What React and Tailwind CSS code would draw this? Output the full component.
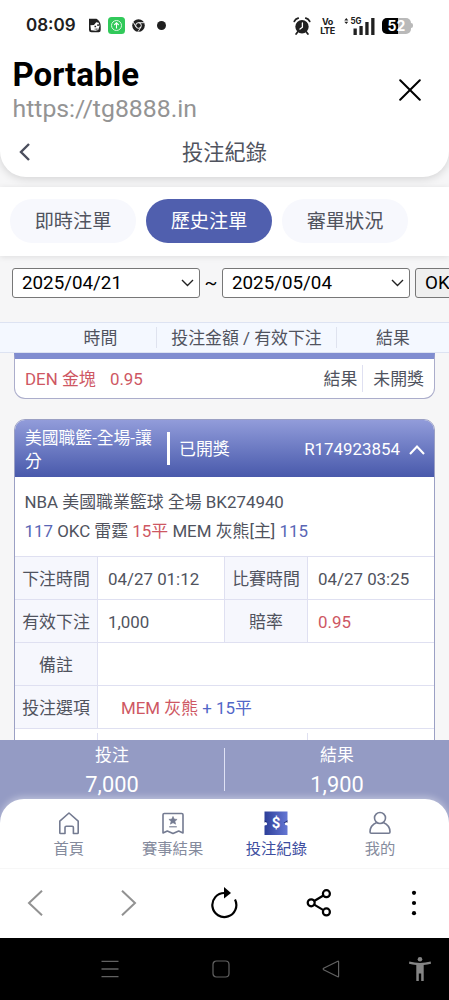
import { useState } from 'react';

const TABS = ['即時注單', '歷史注單', '審單狀況'];

const AlarmIcon = () => (
  <svg width="18" height="18" viewBox="0 0 18 18" className="shrink-0">
    <circle cx="9" cy="9.8" r="6.7" fill="#202020" />
    <path d="M1.3 4.4A6 6 0 0 1 5.2 1.2M16.7 4.4A6 6 0 0 0 12.8 1.2" stroke="#202020" strokeWidth="1.8" fill="none" strokeLinecap="round" />
    <path d="M4.6 15l-1.5 2M13.4 15l1.5 2" stroke="#202020" strokeWidth="1.8" strokeLinecap="round" />
    <path d="M9.4 6v4.2L7 12" stroke="#fff" strokeWidth="1.3" fill="none" strokeLinecap="round" />
  </svg>
);

const StatusBar = () => (
  <div className="flex h-[51px] shrink-0 items-center pl-[26px] pr-[36px]">
    <span className="w-[62px] font-[Inter] text-[17px] font-semibold leading-none text-[#202020]">08:09</span>
    <svg width="14" height="15" viewBox="0 0 14 15" className="shrink-0">
      <path d="M1 .8h7.5C11 2 12.7 5 12.7 8v4q0 2.2-2 2.2H3.5Q1 14.2 1 12z" fill="#202020" />
      <path d="M2.4 7.2 6 7l2.2-2.8 2.5.6.8 3.5-1.3 3.8-2.6.6-4.6-.5z" fill="#fff" />
      <path d="M6.5 7.8h1.6v1.4H6.5zM9.3 6.3h1.5v1.6H9.3zM5.5 11l4-.5v1.2z" fill="#202020" />
    </svg>
    <svg width="17" height="17" viewBox="0 0 17 17" className="ml-[6px] shrink-0">
      <rect width="17" height="17" rx="3.5" fill="#31c95a" />
      <circle cx="8.5" cy="8.5" r="5" fill="none" stroke="#d9f8e0" strokeWidth="1" />
      <path d="M8.5 11.5V6M6.3 8l2.2-2.3L10.7 8" fill="none" stroke="#fff" strokeWidth="1.1" />
    </svg>
    <svg width="13" height="13" viewBox="0 0 13 13" className="ml-[7px] shrink-0">
      <circle cx="6.5" cy="6.5" r="6.3" fill="#202020" />
      <circle cx="6.5" cy="6.5" r="2.8" fill="none" stroke="#fff" strokeWidth="1" />
      <path d="M6.5 3.7h5.6M4 7.9 1.3 3.2M9 7.9 6.1 12.6" stroke="#fff" strokeWidth=".9" />
    </svg>
    <span className="ml-[12px] size-[9px] rounded-full bg-[#202020]" />
    <span className="flex-1" />
    <AlarmIcon />
    <div className="ml-[9px] w-[15px] text-center font-[Inter] text-[9px] font-bold leading-[9px] tracking-[-0.4px] text-[#202020]">
      <p>Vo</p>
      <p>LTE</p>
    </div>
    <svg width="32" height="18" viewBox="0 0 32 18" className="ml-[9px] shrink-0">
      <path d="M.3 3.4 2.3 1l2 2.4zM.3 4.7l2 2.4 2-2.4z" fill="#202020" />
      <text x="6.5" y="7.2" fontFamily="Inter" fontSize="8.5" fontWeight="700" fill="#202020" textLength="11" lengthAdjust="spacingAndGlyphs">5G</text>
      <path d="M9.5 11.5h3.3V18H9.5zM15.4 9h3.3v9h-3.3zM21.3 5h3.3v13h-3.3zM27.2 1h3.3v17h-3.3z" fill="#202020" />
    </svg>
    <div className="relative ml-[6px] flex h-[16px] w-[29px] shrink-0 overflow-hidden rounded-[5px] bg-[#b9b9b9]">
      <span className="w-[16px] bg-black" />
      <span className="absolute inset-0 text-center font-[Inter] text-[14px] font-bold leading-[16px] text-white">52</span>
    </div>
    <span className="h-[5px] w-[2px] shrink-0 rounded-r-full bg-[#b9b9b9]" />
  </div>
);

const DateSelect = ({ value, className }) => (
  <button className={`flex h-[30px] shrink-0 items-center justify-between rounded-[3px] border border-[#777] bg-white pl-[9px] pr-[5px] text-[18.8px] text-black ${className}`}>
    {value}
    <svg width="13" height="8" viewBox="0 0 13 8" fill="none" stroke="#222" strokeWidth="1.4">
      <path d="M1 1l5.5 5.5L12 1" />
    </svg>
  </button>
);

const Label = ({ children }) => (
  <div className="flex items-center justify-center border-b border-r border-[#dfe0f1] bg-[#f6f7fd] pt-[4px]">{children}</div>
);

const Value = ({ children, className = '' }) => (
  <div className={`flex items-center border-b border-[#dfe0f1] pl-[10px] pt-[4px] ${className}`}>{children}</div>
);

const BetCard = () => (
  <div className="mx-[14px] mt-[20px] shrink-0 overflow-hidden rounded-t-[11px] border border-[#9ba0c4] bg-white">
    <div className="flex h-[57px] items-center bg-gradient-to-b from-[#929cda] to-[#4959ab] text-white">
      <div className="ml-[10px] w-[142px] pr-[10px] pt-[2px] text-[16.8px] leading-[23px]">美國職籃-全場-讓分</div>
      <div className="h-[33px] w-[3px] bg-white" />
      <div className="ml-[9px] flex-1 pt-[2px]">已開獎</div>
      <div className="pt-[2px]">R174923854</div>
      <svg width="16" height="10" viewBox="0 0 16 10" fill="none" stroke="#fff" strokeWidth="2.1" className="ml-[9px] mr-[9px] mt-[2px]">
        <path d="M1 9l7-7.4L15 9" />
      </svg>
    </div>
    <div className="h-[80px] border-b border-[#dfe0f1] pl-[9.5px] pt-[11px] leading-[29px]">
      <p>NBA 美國職業籃球 全場 BK274940</p>
      <p>
        <span className="text-[#5966b5]">117</span> OKC 雷霆 <span className="text-[#ce5763]">15平</span> MEM 灰熊[主] <span className="text-[#5966b5]">115</span>
      </p>
    </div>
    <div className="grid auto-rows-[43px] grid-cols-[83px_127px_83px_1fr]">
      <Label>下注時間</Label>
      <Value className="border-r">04/27 01:12</Value>
      <Label>比賽時間</Label>
      <Value>04/27 03:25</Value>
      <Label>有效下注</Label>
      <Value className="border-r">1,000</Value>
      <Label>賠率</Label>
      <Value className="text-[#ce5763]">0.95</Value>
      <Label>備註</Label>
      <Value className="col-span-3" />
      <Label>投注選項</Label>
      <Value className="col-span-3">
        <p className="pl-[13px] text-[#5267c8]"><span className="text-[#ce5763]">MEM 灰熊</span> + 15平</p>
      </Value>
    </div>
    <div className="flex h-[43px] pt-[4px]">
      <div className="w-[83px] border-r border-[#dfe0f1]" />
      <div className="w-[210px] border-r border-[#dfe0f1]" />
    </div>
  </div>
);

const HomeIcon = () => (
  <svg width="24" height="24" viewBox="0 0 24 24" fill="none" stroke="#747b91" strokeWidth="1.6" strokeLinejoin="round">
    <path d="M2.8 10.2 12 2l9.2 8.2v11.5q0 .8-.8.8h-4v-6q0-1.3-1.3-1.3H9.3Q8 15.2 8 16.5v6H3.6q-.8 0-.8-.8z" />
  </svg>
);

const ResultIcon = () => (
  <svg width="24" height="24" viewBox="0 0 24 24" fill="none" stroke="#747b91" strokeWidth="1.6" strokeLinejoin="round">
    <path d="M3.3 2.5h17.4q1.3 0 1.3 1.3v18.2l-4.300-2-5.700 2.500-5.700-2.500-4.300 2V3.800q0-1.300 1.300-1.300z" />
    <path d="m12 5.400 1.200 2.700 2.900.3-2.200 1.900.7 2.900-2.600-1.500-2.600 1.500.7-2.900-2.200-1.900 2.900-.3z" fill="#747b91" strokeWidth=".6" />
    <path d="M8.200 15.800h7.600" strokeWidth="1.1" />
  </svg>
);

const TicketIcon = () => (
  <svg width="24" height="24" viewBox="0 0 24 24">
    <defs>
      <linearGradient id="ticket" x1="0" y1="0" x2="1" y2="0">
        <stop offset="0" stopColor="#2d3f99" />
        <stop offset="1" stopColor="#6577d4" />
      </linearGradient>
    </defs>
    <path d="M.5.5h23v9.200a3 3 0 0 0 0 5V24H.5v-9.300a3 3 0 0 0 0-5z" fill="url(#ticket)" />
    <path d="M23.500 9.200 19.500 12l4-.3zM.5 9.400l2.500 1.300-2.500 1z" fill="#16236d" />
    <circle cx="1.600" cy="12.800" r="1.500" fill="#fff" />
    <circle cx="22.400" cy="12.800" r="1.500" fill="#fff" />
    <text x="12" y="17.200" textAnchor="middle" fontFamily="Roboto" fontSize="15" fontWeight="700" fill="#fff">$</text>
  </svg>
);

const UserIcon = () => (
  <svg width="24" height="24" viewBox="0 0 24 24" fill="none" stroke="#747b91" strokeWidth="1.6" strokeLinejoin="round">
    <circle cx="12" cy="7" r="5.500" />
    <path d="M8.800 11.500C4.500 13.200 2 16.800 2 21q0 1.200 1.200 1.200h17.600q1.200 0 1.200-1.200c0-4.200-2.500-7.800-6.800-9.500" />
  </svg>
);

const NAV = [
  { label: '首頁', icon: HomeIcon },
  { label: '賽事結果', icon: ResultIcon },
  { label: '投注紀錄', icon: TicketIcon, active: true },
  { label: '我的', icon: UserIcon },
];

const BrowserBar = () => (
  <div className="flex h-[70px] shrink-0 items-center border-t border-[#f7f7f7] bg-white pb-[2px] pl-[27px]">
    <svg width="16" height="26" viewBox="0 0 16 26" fill="none" stroke="#929292" strokeWidth="2"><path d="M15 .7 2 13l13 12.300" /></svg>
    <svg width="16" height="26" viewBox="0 0 16 26" fill="none" stroke="#929292" strokeWidth="2" className="ml-[78px]"><path d="M1 .7 14 13 1 25.300" /></svg>
    <svg width="28" height="32" viewBox="0 0 28 32" className="ml-[73px]">
      <path d="M14.500 6A12 12 0 1 0 25 12.500" fill="none" stroke="#000" strokeWidth="2.200" />
      <path d="M14 0v11.500L21 6z" fill="#000" />
    </svg>
    <svg width="26" height="28" viewBox="0 0 26 28" fill="none" stroke="#000" strokeWidth="2.200" className="ml-[67.500px]">
      <circle cx="5.200" cy="13.800" r="3.500" />
      <circle cx="20.400" cy="4.700" r="3.500" />
      <circle cx="20.400" cy="22.900" r="3.500" />
      <path d="m8.200 12 9.200-5.500M8.200 15.600l9.200 5.500" />
    </svg>
    <svg width="8" height="26" viewBox="0 0 8 26" className="ml-[78.500px]">
      <circle cx="4" cy="2.800" r="2.100" /><circle cx="4" cy="13" r="2.100" /><circle cx="4" cy="23.200" r="2.100" />
    </svg>
  </div>
);

const SystemBar = () => (
  <div className="flex h-[62px] shrink-0 items-center bg-black pl-[101px] text-[#626262]">
    <svg width="18" height="18" viewBox="0 0 18 18" stroke="currentColor" strokeWidth="1.300"><path d="M.5 1.300h17M.5 9h17M.5 16.700h17" /></svg>
    <svg width="18" height="18" viewBox="0 0 18 18" fill="none" stroke="currentColor" strokeWidth="1.200" className="ml-[93px]"><rect x="1" y="1" width="16" height="16" rx="3.500" /></svg>
    <svg width="18" height="18" viewBox="0 0 18 18" fill="none" stroke="currentColor" strokeWidth="1.200" strokeLinejoin="round" className="ml-[92px]"><path d="M15.800 1.300q.8-.3.800.6v14.200q0 .9-.8.600L1.600 9.700q-.8-.7 0-1.400z" /></svg>
    <svg width="22" height="26" viewBox="0 0 22 26" fill="#858585" className="ml-[69px]">
      <circle cx="11" cy="3.200" r="2.300" />
      <path d="M.3 5.500Q11 8.300 21.700 5.500l.3 2.300q-3.500 1-7.300 1.200V25h-2.500v-7.500H9.800V25H7.300V9Q3.500 8.800 0 7.800z" />
    </svg>
  </div>
);

export default function App() {
  const [tab, setTab] = useState(1);

  return (
    <div className="flex h-[1000px] w-[449px] flex-col overflow-hidden bg-[#f6f6f7] font-[Roboto,'Noto_Sans_CJK_TC',sans-serif] text-[#50535e]">
      <header className="z-10 h-[177px] shrink-0 rounded-b-[26px] bg-white shadow-[0_2px_8px_rgba(0,0,0,0.14)]">
        <StatusBar />
        <div className="flex h-[78px] items-center justify-between pl-[12.500px] pr-[28px]">
          <div className="pt-[4px]">
            <h1 className="text-[33px] font-bold leading-[34px] text-black">Portable</h1>
            <p className="text-[24.800px] leading-[34px] text-[#949494]">https://tg8888.in</p>
          </div>
          <svg width="22" height="22" viewBox="0 0 22 22" stroke="#000" strokeWidth="2" strokeLinecap="round"><path d="M1.200 1.200l19.600 19.600M20.800 1.200 1.200 20.800" /></svg>
        </div>
        <div className="flex h-[48px] items-center pl-[19px] pr-[30px]">
          <svg width="11" height="18" viewBox="0 0 11 18" fill="none" stroke="#4b4e5d" strokeWidth="2.400" className="mb-[2px]"><path d="M10 1 2 9l8 8" /></svg>
          <h2 className="flex-1 text-center text-[21.200px] leading-[30px]">投注紀錄</h2>
        </div>
      </header>

      <div className="mt-[10px] flex h-[69px] shrink-0 items-center gap-[10px] bg-white pb-px pl-[10px] shadow-[0_1px_6px_rgba(0,0,0,0.1)]">
        {TABS.map((t, i) => (
          <button key={t} onClick={() => setTab(i)}
            className={`h-[44px] w-[126px] rounded-full pt-[3px] text-[19.200px] ${tab === i ? 'bg-[#505fae] text-white' : 'bg-[#f7f8fd]'}`}>
            {t}
          </button>
        ))}
      </div>

      <div className="flex h-[66px] shrink-0 items-start pl-[12px] pt-[12px]">
        <DateSelect value="2025/04/21" className="w-[188px]" />
        <span className="w-[22px] shrink-0 text-center text-[19px] leading-[30px] text-black">~</span>
        <DateSelect value="2025/05/04" className="w-[188px]" />
        <button className="ml-[5px] h-[30px] w-[56px] shrink-0 rounded-[3px] border border-[#777] bg-[#efefef] pl-[9px] text-left text-[18.800px] text-black">OK</button>
      </div>

      <div className="flex h-[31px] shrink-0 items-center border-y border-[#dde3f2] bg-[#f4f8ff] text-[16.900px]">
        <div className="w-[156px] pl-[45px] pt-[2px] text-center">時間</div>
        <div className="h-[21px] w-[181px] border-x border-[#dfe3ef] pt-px text-center leading-[21px]">投注金額 / 有效下注</div>
        <div className="flex-1 pt-[2px] text-center">結果</div>
      </div>

      <main className="flex min-h-0 flex-1 flex-col overflow-hidden text-[16.900px]">
        <div className="mx-[14px] flex h-[46px] shrink-0 items-center rounded-b-[11px] border border-t-[6px] border-[#abadcb] border-t-[#808dd0] bg-white px-[10px]">
          <span className="flex-1 pt-[2px] text-[#ce5763]">DEN 金塊 <span className="ml-[10px]">0.95</span></span>
          <span className="mr-[5px] pt-[2px]">結果</span>
          <span className="h-[27px] border-l border-[#dfe0f1] pl-[10px] pt-px leading-[27px]">未開獎</span>
        </div>
        <BetCard />
      </main>

      <footer className="h-[128px] shrink-0 overflow-hidden bg-[#949bc4]">
        <div className="flex h-[59px] text-center text-white">
          <div className="flex-1">
            <p className="pt-[2px] text-[16.900px] leading-[27px]">投注</p>
            <p className="pt-px text-[21.800px] leading-[30px]">7,000</p>
          </div>
          <div className="mt-[8px] h-[43px] w-px bg-[#dfe2f5]" />
          <div className="flex-1">
            <p className="pt-[2px] text-[16.900px] leading-[27px]">結果</p>
            <p className="pt-px text-[21.800px] leading-[30px]">1,900</p>
          </div>
        </div>
        <nav className="flex h-[69px] rounded-t-[24px] bg-white px-[17px] shadow-[0_-2px_7px_rgba(255,255,255,0.4)]">
          {NAV.map(({ label, icon: Icon, active }) => (
            <a key={label} className={`flex flex-1 flex-col items-center gap-[2px] pt-[12px] text-[15.300px] leading-[25px] ${active ? 'text-[#3e4e9f]' : 'text-[#858b9d]'}`}>
              <Icon />
              {label}
            </a>
          ))}
        </nav>
      </footer>

      <BrowserBar />
      <SystemBar />
    </div>
  );
}
